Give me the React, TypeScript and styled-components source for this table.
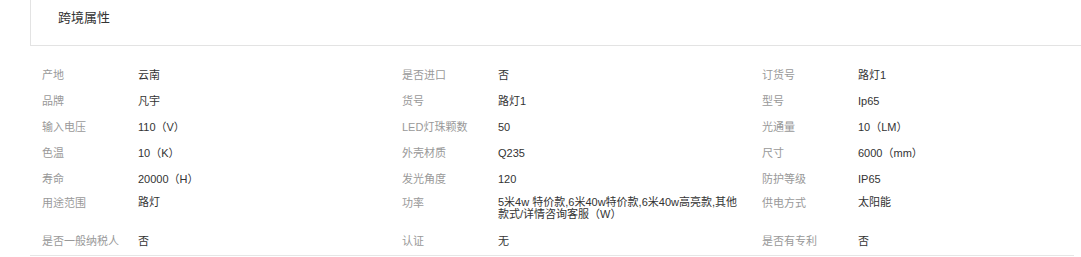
import React, { FC } from 'react';
import styled, { createGlobalStyle } from 'styled-components';

interface Attr {
  label: string;
  value: string;
}

const ATTRS: Attr[][] = [
  [
    { label: '产地', value: '云南' },
    { label: '是否进口', value: '否' },
    { label: '订货号', value: '路灯1' }
  ],
  [
    { label: '品牌', value: '凡宇' },
    { label: '货号', value: '路灯1' },
    { label: '型号', value: 'Ip65' }
  ],
  [
    { label: '输入电压', value: '110（V）' },
    { label: 'LED灯珠颗数', value: '50' },
    { label: '光通量', value: '10（LM）' }
  ],
  [
    { label: '色温', value: '10（K）' },
    { label: '外壳材质', value: 'Q235' },
    { label: '尺寸', value: '6000（mm）' }
  ],
  [
    { label: '寿命', value: '20000（H）' },
    { label: '发光角度', value: '120' },
    { label: '防护等级', value: 'IP65' }
  ],
  [
    { label: '用途范围', value: '路灯' },
    {
      label: '功率',
      value: '5米4w 特价款,6米40w特价款,6米40w高亮款,其他款式/详情咨询客服（W）'
    },
    { label: '供电方式', value: '太阳能' }
  ],
  [
    { label: '是否一般纳税人', value: '否' },
    { label: '认证', value: '无' },
    { label: '是否有专利', value: '否' }
  ]
];

const GlobalStyle = createGlobalStyle`
  body {
    margin: 0;
    background: #fff;
    overflow: hidden;
    font-family: "Liberation Sans", Arial, "Noto Sans CJK SC", sans-serif;
  }
`;

const Page = styled.div`
  width: 1081px;
  padding-left: 30px;
  box-sizing: border-box;
  overflow: hidden;
`;

const Header = styled.div`
  width: 1070px;
  height: 45px;
  border-left: 1px solid #e3e3e3;
  border-bottom: 1px solid #e3e3e3;
  padding-left: 27px;
  box-sizing: content-box;
`;

const Title = styled.h3`
  margin: 0;
  font-size: 13px;
  font-weight: normal;
  line-height: 36px;
  color: #333;
`;

const Grid = styled.div`
  width: 1044px;
  box-sizing: border-box;
  display: grid;
  grid-template-columns: repeat(3, 360px);
  padding: 16px 0 1px 12px;
  border-bottom: 1px solid #e6e6e6;
`;

const Item = styled.div<{ $tall?: boolean }>`
  display: flex;
  align-items: flex-start;
  font-size: 11px;
  line-height: 14px;
  padding: ${(p) => (p.$tall ? '4px 0 8px' : '6px 0')};
`;

const Label = styled.span`
  flex: 0 0 96px;
  color: #999;
  white-space: nowrap;
`;

const Value = styled.span<{ $tall?: boolean }>`
  max-width: 240px;
  color: #333;
  line-height: ${(p) => (p.$tall ? '12px' : '14px')};
`;

const App: FC = () => (
  <Page>
    <GlobalStyle />
    <Header>
      <Title>跨境属性</Title>
    </Header>
    <Grid>
      {ATTRS.map((row, i) => {
        const tall = row.some((a) => a.value.length > 30);
        return row.map((a) => (
          <Item key={`${i}-${a.label}`} $tall={tall}>
            <Label>{a.label}</Label>
            <Value $tall={tall}>{a.value}</Value>
          </Item>
        ));
      })}
    </Grid>
  </Page>
);

export default App;
